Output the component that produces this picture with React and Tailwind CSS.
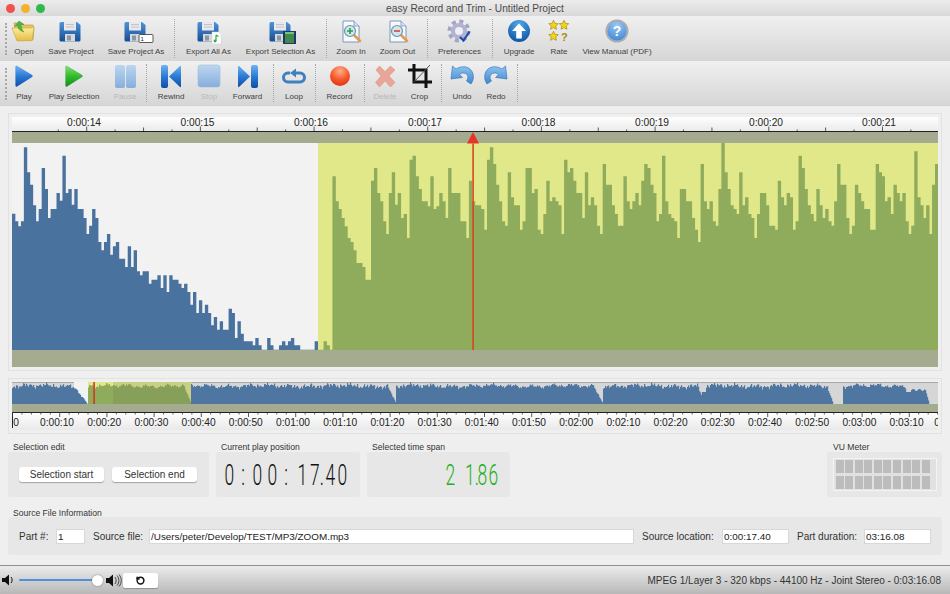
import { RotateCcw } from "lucide-react";

const leftTops = [
  327, 350, 365, 350, 128, 203, 240, 302, 350, 313, 190, 253, 340, 313, 313, 265, 288, 153, 265, 253, 300, 253, 313, 313, 340, 388, 363, 313, 340, 412, 437, 412, 388, 450, 425, 412, 462, 462, 487, 425, 487, 437, 500, 512, 500, 500, 537, 525, 525, 512, 550, 512, 562, 512, 525, 525, 537, 550, 537, 562, 600, 562, 625, 587, 625, 600, 625, 662, 637, 675, 650, 675, 675, 612, 625, 700, 650, 687, 710, 710, 710, 722, 700, 722, 735, 735, 700, 722, 735, 735, 722, 710, 722, 710, 700, 722, 722, 735, 735, 735, 735, 735, 710, 735, 735, 710, 722, 735, 215, 290, 313, 340, 365, 400, 412, 437, 475, 475, 487, 525, 525, 228, 190, 265, 290, 350, 388, 265, 203, 300, 265, 340, 328, 400, 165, 153, 215, 253, 290, 290, 305, 215, 313, 305, 265, 290, 340, 190, 265, 265, 265, 350, 350, 400, 228, 290, 302, 302,
];

const rightTops = [
  313, 375, 165, 128, 178, 240, 290, 350, 363, 203, 278, 302, 302, 375, 350, 190, 190, 265, 253, 375, 388, 328, 228, 290, 278, 290, 302, 388, 165, 203, 190, 228, 265, 265, 340, 203, 302, 278, 302, 363, 388, 178, 240, 240, 302, 328, 363, 363, 215, 290, 313, 290, 265, 302, 228, 178, 190, 240, 265, 350, 328, 153, 290, 328, 340, 350, 400, 253, 253, 290, 290, 340, 375, 412, 178, 290, 313, 290, 350, 363, 253, 115, 203, 253, 302, 313, 328, 203, 302, 278, 328, 340, 400, 328, 265, 265, 302, 363, 363, 375, 228, 278, 302, 265, 278, 375, 350, 153, 190, 253, 302, 328, 350, 253, 302, 340, 313, 350, 363, 290, 178, 240, 240, 340, 388, 363, 240, 265, 290, 313, 313, 375, 375, 178, 203, 215, 290, 278, 328, 240, 265, 290, 265, 350, 388, 363, 140, 278, 302, 340, 302, 388, 240, 178,
];

const LEFT_STEP = 2.967;
const RIGHT_START = 469;
const SELECTION_X = 306;
const rightStep = (926 - RIGHT_START) / rightTops.length;

const bars = [
  ...leftTops.map((top, i) => ({ x: i * LEFT_STEP, w: LEFT_STEP, top })),
  ...rightTops.map((top, i) => ({ x: RIGHT_START + i * rightStep, w: rightStep, top })),
];

// bars overlap a little so no hairlines show between them
const toRect = (b) => {
  const y = (b.top - 115) / 3;
  return `M${b.x.toFixed(2)} ${y.toFixed(2)}H${(b.x + b.w + 0.4).toFixed(2)}V207H${b.x.toFixed(2)}Z`;
};

const bluePath = bars.filter((b) => b.x < SELECTION_X - 1).map(toRect).join("");
const greenPath = bars.filter((b) => b.x >= SELECTION_X - 1).map(toRect).join("");

const mainTicks = [];
for (let i = -1; i < 33; i++) {
  const x = 74.7 + i * 28.42;
  const len = i % 4 === 0 ? 4.5 : i % 2 === 0 ? 3.5 : 1.5;
  mainTicks.push({ x, len });
}

const mainLabels = [
  ["0:00:14", 72],
  ["0:00:15", 185.5],
  ["0:00:16", 299],
  ["0:00:17", 413],
  ["0:00:18", 526.5],
  ["0:00:19", 640],
  ["0:00:20", 754],
  ["0:00:21", 867],
];

const overviewLabels = [
  "0:00:10", "0:00:20", "0:00:30", "0:00:40", "0:00:50", "0:01:00", "0:01:10", "0:01:20", "0:01:30", "0:01:40",
  "0:01:50", "0:02:00", "0:02:10", "0:02:20", "0:02:30", "0:02:40", "0:02:50", "0:03:00", "0:03:10",
];

// envelope of the whole file for the small overview strip
const overviewHeight = (X) => {
  const n = 18 + Math.sin(X * 0.31) + 0.9 * Math.sin(X * 0.83 + 1) + 0.7 * Math.sin(X * 1.9 + 2) + 0.6 * Math.sin(X * 3.7) + 1.2 * Math.sin(X * 5.3) * Math.sin(X * 0.9);
  const fall = (a, b, to = 0) => n + ((to - n) * (X - a)) / (b - a);
  if (X >= 74 && X < 87) return fall(74, 87);
  if (X >= 87 && X < 88) return 0;
  if (X >= 183 && X < 191) return fall(183, 191);
  if (X >= 387 && X < 396) return fall(387, 396);
  if (X >= 593 && X < 603) return fall(593, 603);
  if (X >= 697 && X < 702) return fall(697, 702, 7);
  if (X >= 702 && X < 706) return 12;
  if (X >= 827 && X < 833) return fall(827, 833);
  if (X >= 833 && X < 843) return 0;
  if (X >= 906 && X < 911) return 12;
  if (X >= 911 && X < 925) return 14 + Math.sin(X);
  if (X >= 925 && X < 929) return 14 - (X - 925) * 3.5;
  if (X >= 929) return 0;
  return n;
};

const overviewPath = (from, to) => {
  let d = "";
  for (let X = from; X < to; X++) {
    const h = overviewHeight(X);
    d += `M${X - 12} ${(22 - h).toFixed(1)}H${X - 10.8}V22H${X - 12}Z`;
  }
  return d;
};

const Defs = () => (
  <svg className="block h-0 w-0">
    <defs>
      <linearGradient id="disk" x1="0" y1="0" x2="0" y2="1">
        <stop offset="0" stopColor="#4f93d8" />
        <stop offset="1" stopColor="#174d94" />
      </linearGradient>
      <linearGradient id="blue" x1="0" y1="0" x2="0" y2="1">
        <stop offset="0" stopColor="#6fb2f0" />
        <stop offset="0.5" stopColor="#2a7ad6" />
        <stop offset="1" stopColor="#0f4fa6" />
      </linearGradient>
      <linearGradient id="green" x1="0" y1="0" x2="0" y2="1">
        <stop offset="0" stopColor="#7fe06a" />
        <stop offset="0.5" stopColor="#33bb2c" />
        <stop offset="1" stopColor="#129015" />
      </linearGradient>
      <linearGradient id="pale" x1="0" y1="0" x2="0" y2="1">
        <stop offset="0" stopColor="#bcd6ef" />
        <stop offset="1" stopColor="#85aede" />
      </linearGradient>
      <linearGradient id="arrow" x1="0" y1="0" x2="0" y2="1">
        <stop offset="0" stopColor="#8cc4f2" />
        <stop offset="1" stopColor="#3f86cc" />
      </linearGradient>
      <linearGradient id="folder" x1="0" y1="0" x2="0" y2="1">
        <stop offset="0" stopColor="#fff0a0" />
        <stop offset="1" stopColor="#e5bb45" />
      </linearGradient>
      <radialGradient id="rec" cx="0.5" cy="0.25" r="0.8">
        <stop offset="0" stopColor="#ffb08a" />
        <stop offset="0.55" stopColor="#f5592c" />
        <stop offset="1" stopColor="#e0300c" />
      </radialGradient>
      <radialGradient id="orb" cx="0.5" cy="0.2" r="0.85">
        <stop offset="0" stopColor="#52a8ea" />
        <stop offset="1" stopColor="#0b4f9e" />
      </radialGradient>
      <radialGradient id="help" cx="0.5" cy="0.2" r="0.85">
        <stop offset="0" stopColor="#9cc8f2" />
        <stop offset="1" stopColor="#3f86d6" />
      </radialGradient>
    </defs>
  </svg>
);

const Icon = ({ children, w = 28, h = 24 }) => (
  <svg width={w} height={h} viewBox={`0 0 ${w} ${h}`} className="block overflow-visible">
    {children}
  </svg>
);

const Floppy = ({ children }) => (
  <Icon>
    <path d="M4 3h16l3.5 3v15a1.5 1.5 0 0 1-1.5 1.5H4A1.5 1.5 0 0 1 2.500 21V4.500A1.500 1.500 0 0 1 4 3z" fill="url(#disk)" />
    <rect x="7" y="3" width="12" height="8.500" fill="#e9e9ec" />
    <path d="M9 5.500h8M9 8h8" stroke="#b5b8c0" strokeWidth="0.8" />
    <rect x="8" y="15" width="10" height="7.500" fill="#d5d8dd" />
    <rect x="10" y="16.500" width="4" height="5" fill="#8f97a3" />
    {children}
  </Icon>
);

const SaveAsBadge = () => (
  <g>
    <rect x="17" y="15.500" width="14" height="8" rx="1" fill="#fff" stroke="#333" strokeWidth="0.8" />
    <text x="18.500" y="22" fontSize="6" fill="#222">1</text>
  </g>
);

const NoteBadge = () => (
  <g>
    <path d="M17 13h7l2 2v10h-9z" fill="#fff" stroke="#ccc" strokeWidth="0.5" />
    <path d="M21 16v6M21 16l2.500 1.500" stroke="#2fae3a" strokeWidth="1.200" fill="none" />
    <circle cx="20" cy="22" r="1.400" fill="#2fae3a" />
  </g>
);

const SelectionBadge = () => (
  <g>
    <rect x="16" y="12" width="13" height="13" fill="#1d3a66" />
    <rect x="18" y="13" width="9" height="11" fill="#3f8a4a" />
    <path d="M18 13h9v2h-9z" fill="#7cc07e" />
  </g>
);

const OpenIcon = () => (
  <Icon w={26}>
    <path d="M3 4h8l2 2h9l1 3 -1 12H6z" fill="#e6c75a" stroke="#b6933a" strokeWidth="0.6" />
    <path d="M1 9h19l3 -1 -2 13.500 -15 .5z" fill="url(#folder)" stroke="#c7a240" strokeWidth="0.6" />
    <path d="M8 2l5 3.500 -3 .5c.5 3 1 5 3 7 -4 -1 -6 -3 -6.500 -6.500l-3 .8z" fill="#4fb548" stroke="#2f8a2f" strokeWidth="0.4" />
  </Icon>
);

const ZoomIcon = ({ out }) => (
  <Icon w={24}>
    <path d="M4 2h11l5 5v16H4z" fill="#f7f9fc" stroke="#7a96bb" strokeWidth="1" />
    <path d="M15 2v5h5" fill="#d8e3f0" stroke="#7a96bb" strokeWidth="0.8" />
    <path d="M15 16l6 6" stroke="#e59a4d" strokeWidth="2.600" strokeLinecap="round" />
    <circle cx="11" cy="12" r="5.500" fill="#cfe6ea" stroke="#6d95a8" strokeWidth="1.200" />
    {out ? (
      <path d="M8 12h6" stroke="#d8453a" strokeWidth="1.600" />
    ) : (
      <path d="M8 12h6M11 9v6" stroke="#2f9e4f" strokeWidth="1.600" />
    )}
  </Icon>
);

const GearIcon = () => (
  <Icon>
    <circle cx="13" cy="12" r="9.500" fill="none" stroke="#a3a5c4" strokeWidth="4" strokeDasharray="4 3.460" />
    <circle cx="13" cy="12" r="8" fill="#b2b4cf" />
    <circle cx="13" cy="12" r="4" fill="#eeeef4" />
    <path d="M14 18l3.500 3.500 6 -9" fill="none" stroke="#1f4fa8" strokeWidth="2.200" />
  </Icon>
);

const UpgradeIcon = () => (
  <Icon w={24}>
    <circle cx="12" cy="12" r="11" fill="url(#orb)" />
    <path d="M12 4.500l7 7.500h-4.200v7.500h-5.600V12H5z" fill="#fff" />
  </Icon>
);

const Star = ({ x, y }) => (
  <path
    transform={`translate(${x} ${y}) scale(.48)`}
    d="M0 -10l3 6.500 7 .8 -5.200 4.800 1.400 7L0 5.500 -6.200 9l1.400 -7 -5.200 -4.800 7 -.8z"
    fill="#f4d50f"
    stroke="#7c6a10"
    strokeWidth="1"
  />
);

const RateIcon = () => (
  <Icon w={24}>
    <Star x={6.500} y={6} />
    <Star x={17} y={6} />
    <Star x={6.500} y={17} />
    <text x="14" y="21.500" fontSize="11" fontWeight="700" fill="#a78a12">?</text>
  </Icon>
);

const HelpIcon = () => (
  <Icon w={24}>
    <circle cx="12" cy="12" r="11.500" fill="#a9adb3" />
    <circle cx="12" cy="12" r="9.500" fill="url(#help)" />
    <text x="12" y="17" fontSize="14" fontWeight="700" fill="#fff" textAnchor="middle">?</text>
  </Icon>
);

const PlayIcon = ({ fill }) => (
  <Icon w={22}>
    <path d="M4 2l15 9a1.200 1.200 0 0 1 0 2L4 22.500a1 1 0 0 1-1.500 -.9V3a1 1 0 0 1 1.500 -1z" fill={fill} stroke="#1a5aa0" strokeOpacity=".25" strokeWidth=".5" />
  </Icon>
);

const PauseIcon = () => (
  <Icon w={24}>
    <rect x="2" y="1" width="10" height="23" rx="2" fill="url(#pale)" />
    <rect x="13" y="1" width="10" height="23" rx="2" fill="url(#pale)" />
  </Icon>
);

const RewindIcon = () => (
  <Icon w={22}>
    <rect x="1" y="1" width="7" height="23" rx="2" fill="url(#blue)" />
    <path d="M9 12.500L20 2a.6 .6 0 0 1 1 .5v20a.6 .6 0 0 1-1 .5z" fill="url(#blue)" />
  </Icon>
);

const StopIcon = () => (
  <Icon w={24}>
    <rect x="1" y="1" width="22" height="22" rx="2.500" fill="url(#pale)" stroke="#a0bcd9" strokeWidth=".6" />
  </Icon>
);

const ForwardIcon = () => (
  <Icon w={22}>
    <rect x="14" y="1" width="7" height="23" rx="2" fill="url(#blue)" />
    <path d="M13 12.500L2 2a.6 .6 0 0 0-1 .5v20a.6 .6 0 0 0 1 .5z" fill="url(#blue)" />
  </Icon>
);

const LoopIcon = () => (
  <Icon w={24}>
    <path d="M13 9h5a3.500 3.500 0 0 1 0 9H6a3.500 3.500 0 0 1 0 -9h2" fill="none" stroke="#3f80bd" strokeWidth="3" />
    <path d="M14 4.500v9l-6 -4.500z" fill="#3f80bd" />
  </Icon>
);

const RecordIcon = () => (
  <Icon w={24}>
    <circle cx="12" cy="12" r="10" fill="url(#rec)" />
  </Icon>
);

const DeleteIcon = () => (
  <Icon w={24}>
    <path d="M3 6l3.500 -4L12 7.500 17.500 2 22 6l-6 6 6 6.500L17.500 23 12 17l-5.500 6L2.500 18.500 8 12z" fill="#e9a596" stroke="#d98f80" strokeWidth=".5" />
  </Icon>
);

const CropIcon = () => (
  <Icon w={24}>
    <path d="M6 0v18h18M0 6h18v18" fill="none" stroke="#111" strokeWidth="3" />
    <path d="M6 18L22 1" stroke="#555" strokeWidth="1" />
  </Icon>
);

const UndoIcon = () => (
  <Icon w={26}>
    <path d="M7 5c6 -4 15 -3 17 5 1 4 0 7 -2 10l-4.500 -3c2 -3 2 -6 -1 -7.500 -2 -1 -4.500 -.5 -6 1l3 3L2 15 3.500 2z" fill="url(#arrow)" stroke="#2f6fb0" strokeWidth=".6" />
  </Icon>
);

const RedoIcon = () => (
  <Icon w={26}>
    <path d="M19 5c-6 -4 -15 -3 -17 5 -1 4 0 7 2 10l4.500 -3c-2 -3 -2 -6 1 -7.500 2 -1 4.500 -.5 6 1l-3 3L24 15 22.500 2z" fill="url(#arrow)" stroke="#2f6fb0" strokeWidth=".6" />
  </Icon>
);

const ToolButton = ({ width, label, disabled, children }) => (
  <div className={`${width} flex shrink-0 flex-col items-center`}>
    <div className="flex h-[24px] items-center justify-center">{children}</div>
    <span className={`mt-[3px] whitespace-nowrap text-[8px] leading-[12px] ${disabled ? "text-[#b9b9b9]" : "text-[#3f3f3f]"}`}>
      {label}
    </span>
  </div>
);

const Sep = () => (
  <div className="flex w-[8px] shrink-0 justify-center pb-[3px]">
    <div className="h-full border-l border-dotted border-[#a6a6a6]" />
  </div>
);

const Grip = () => (
  <div className="flex w-[8px] shrink-0 justify-end pr-[1px] pt-[4px]">
    <div className="h-[32px] border-l-2 border-dotted border-[#a8a8a8]" />
  </div>
);

const LcdCell = ({ width, ch, color }) => (
  <span className={`${width} flex h-full shrink-0 items-center justify-center`}>
    <span className={`inline-block scale-x-[.58] font-['Roboto',sans-serif] text-[30px] font-light leading-none ${color}`}>
      {ch}
    </span>
  </span>
);

const Field = ({ width, value }) => (
  <input
    readOnly
    value={value}
    className={`${width} h-[15px] shrink-0 border border-[#d8d8d8] bg-white px-[1px] text-[9.900px] leading-[13px] text-[#222] outline-none`}
  />
);

const Panel = ({ label, labelClass = "pl-[5px]", width, children }) => (
  <div className={`${width} flex shrink-0 flex-col`}>
    <div className={`${labelClass} h-[10px] text-[8.600px] leading-[10px] text-[#333]`}>{label}</div>
    <div className="h-[45px] rounded-[3px] bg-[#e7e7e7]">{children}</div>
  </div>
);

export default function App() {
  const vu = [...Array(10).keys()];
  return (
    <div className="flex h-screen w-screen flex-col overflow-hidden bg-[#efefef] font-['Liberation_Sans',sans-serif]">
      <Defs />

      <div className="relative flex h-[16px] shrink-0 items-center justify-center bg-gradient-to-b from-[#ececec] to-[#d9d9d9] pt-[1px]">
        <div className="absolute left-[6px] top-[3.500px] flex gap-[6px]">
          <span className="h-[9px] w-[9px] rounded-full bg-[#f0524c]" />
          <span className="h-[9px] w-[9px] rounded-full bg-[#f6b02e]" />
          <span className="h-[9px] w-[9px] rounded-full bg-[#2fb94a]" />
        </div>
        <span className="text-[10.200px] text-[#4a4a4a]">easy Record and Trim - Untitled Project</span>
      </div>

      <div className="flex h-[44.500px] shrink-0 bg-gradient-to-b from-[#f0f0f0] to-[#d6d6d6] pt-[3px]">
        <Grip />
        <ToolButton width="w-[32px]" label="Open"><OpenIcon /></ToolButton>
        <ToolButton width="w-[62px]" label="Save Project"><Floppy /></ToolButton>
        <ToolButton width="w-[68px]" label="Save Project As"><Floppy><SaveAsBadge /></Floppy></ToolButton>
        <Sep />
        <ToolButton width="w-[61px]" label="Export All As"><Floppy><NoteBadge /></Floppy></ToolButton>
        <ToolButton width="w-[83px]" label="Export Selection As"><Floppy><SelectionBadge /></Floppy></ToolButton>
        <Sep />
        <ToolButton width="w-[42px]" label="Zoom In"><ZoomIcon /></ToolButton>
        <ToolButton width="w-[51px]" label="Zoom Out"><ZoomIcon out /></ToolButton>
        <Sep />
        <ToolButton width="w-[57px]" label="Preferences"><GearIcon /></ToolButton>
        <Sep />
        <ToolButton width="w-[46px]" label="Upgrade"><UpgradeIcon /></ToolButton>
        <ToolButton width="w-[34px]" label="Rate"><RateIcon /></ToolButton>
        <ToolButton width="w-[82px]" label="View Manual (PDF)"><HelpIcon /></ToolButton>
      </div>

      <div className="flex h-[45.500px] shrink-0 border-b border-[#d2d2d2] bg-gradient-to-b from-[#f0f0f0] to-[#d6d6d6] pt-[3px]">
        <Grip />
        <ToolButton width="w-[32px]" label="Play"><PlayIcon fill="url(#blue)" /></ToolButton>
        <ToolButton width="w-[68px]" label="Play Selection"><PlayIcon fill="url(#green)" /></ToolButton>
        <ToolButton width="w-[34px]" label="Pause" disabled><PauseIcon /></ToolButton>
        <Sep />
        <ToolButton width="w-[42px]" label="Rewind"><RewindIcon /></ToolButton>
        <ToolButton width="w-[34px]" label="Stop" disabled><StopIcon /></ToolButton>
        <ToolButton width="w-[43px]" label="Forward"><ForwardIcon /></ToolButton>
        <Sep />
        <ToolButton width="w-[34px]" label="Loop"><LoopIcon /></ToolButton>
        <Sep />
        <ToolButton width="w-[41px]" label="Record"><RecordIcon /></ToolButton>
        <Sep />
        <ToolButton width="w-[34px]" label="Delete" disabled><DeleteIcon /></ToolButton>
        <ToolButton width="w-[35px]" label="Crop"><CropIcon /></ToolButton>
        <Sep />
        <ToolButton width="w-[34px]" label="Undo"><UndoIcon /></ToolButton>
        <ToolButton width="w-[34px]" label="Redo"><RedoIcon /></ToolButton>
        <Sep />
      </div>

      <div className="mx-[8px] mt-[7px] w-[934px] shrink-0 border border-[#e2e2e2] p-[3px]">
        <div className="relative w-[926px]">
          <div className="h-[15px] bg-gradient-to-b from-white to-[#e9e9e9]">
            <svg width="926" height="15" className="block">
              <path d="M0 14.500H926" stroke="#222" strokeWidth="1" />
              {mainTicks.map((t) => (
                <path key={t.x} d={`M${t.x} ${14 - t.len}V14`} stroke="#333" strokeWidth="0.8" />
              ))}
              {mainLabels.map(([text, x]) => (
                <text key={text} x={x} y="8.800" fontSize="10.200" fill="#222" textAnchor="middle">{text}</text>
              ))}
            </svg>
          </div>
          <div className="h-[11px] bg-[#a5ab8f]" />
          <svg width="926" height="207" className="block">
            <rect width="306" height="207" fill="#f2f2f2" />
            <rect x="306" width="620" height="207" fill="#e0e88a" />
            <path d={bluePath} fill="#4a729e" />
            <path d={greenPath} fill="#8fab5c" />
          </svg>
          <div className="h-[17px] bg-[#a5ab8f]" />
          <svg width="14" height="218" className="absolute left-[454px] top-[15px] block overflow-visible">
            <path d="M7 0l6 11.500H1z" fill="#e5352a" />
            <rect x="6.300" y="11.500" width="1.600" height="206.500" fill="#d9471f" />
          </svg>
        </div>
      </div>

      <div className="mx-[8px] mt-[7px] w-[934px] shrink-0 border border-[#e2e2e2] p-[3px]">
        <div className="w-[926px]">
          <svg width="926" height="22" className="block">
            <rect width="926" height="22" fill="#d6d6d6" />
            <rect x="0" y="0" width="926" height="1" fill="#a9a9a9" />
            <rect x="62" y="0" width="39" height="22" fill="#f2f2f2" />
            <rect x="76" y="0" width="25" height="22" fill="#e0e88a" />
            <rect x="101" y="0" width="78" height="22" fill="#c9d083" />
            <path d={overviewPath(12, 88)} fill="#4e76a0" />
            <path d={overviewPath(88, 113)} fill="#8fab5c" />
            <path d={overviewPath(113, 191)} fill="#86a05a" />
            <path d={overviewPath(191, 938)} fill="#4e76a0" />
            <rect x="81.300" y="0" width="1.600" height="22" fill="#d9371f" />
          </svg>
          <div className="h-[8px] bg-[#a5ab8f]" />
          <div className="h-[18px] bg-gradient-to-b from-white to-[#e9e9e9]">
            <svg width="926" height="18" className="block">
              <path d="M0 .500H926" stroke="#222" strokeWidth="1" />
              <path d="M.5 0V16" stroke="#222" strokeWidth="1" />
              {[...Array(99).keys()].map((i) => (
                <path key={i} d={`M${i * 9.44 + 0.5} 0V${i % 5 === 0 ? 5 : 2.500}`} stroke="#333" strokeWidth="0.8" />
              ))}
              <text x="4" y="13.500" fontSize="10.200" fill="#222" textAnchor="middle">0</text>
              {overviewLabels.map((text, i) => (
                <text key={text} x={45 + i * 47.2} y="13.500" fontSize="10.200" fill="#222" textAnchor="middle">{text}</text>
              ))}
              <text x="925" y="13.500" fontSize="10.200" fill="#222" textAnchor="middle">0</text>
            </svg>
          </div>
        </div>
      </div>

      <div className="mt-[8px] flex shrink-0 gap-[7px] px-[8px]">
        <Panel label="Selection edit" width="w-[201px]">
          <div className="flex h-full items-center gap-[8px] pl-[11px]">
            <button className="h-[15px] w-[85px] rounded-[3px] bg-white text-[10px] leading-[15px] text-[#333] shadow-[0_1px_1px_rgba(0,0,0,.3)]">Selection start</button>
            <button className="h-[15px] w-[85px] rounded-[3px] bg-white text-[10px] leading-[15px] text-[#333] shadow-[0_1px_1px_rgba(0,0,0,.3)]">Selection end</button>
          </div>
        </Panel>
        <Panel label="Current play position" width="w-[144px]">
          <div className="flex h-full pl-[5px]">
            <LcdCell width="w-[16px]" ch="0" color="text-[#111]" />
            <LcdCell width="w-[13px]" ch=":" color="text-[#111]" />
            <LcdCell width="w-[15px]" ch="0" color="text-[#111]" />
            <LcdCell width="w-[15px]" ch="0" color="text-[#111]" />
            <LcdCell width="w-[13px]" ch=":" color="text-[#111]" />
            <LcdCell width="w-[18px]" ch="1" color="text-[#111]" />
            <LcdCell width="w-[12px]" ch="7." color="text-[#111]" />
            <LcdCell width="w-[14px]" ch="4" color="text-[#111]" />
            <LcdCell width="w-[11px]" ch="0" color="text-[#111]" />
          </div>
        </Panel>
        <Panel label="Selected time span" width="w-[143px]">
          <div className="flex h-full pl-[76px]">
            <LcdCell width="w-[15px]" ch="2" color="text-[#22b022]" />
            <LcdCell width="w-[12px] ml-[8px]" ch="1." color="text-[#22b022]" />
            <LcdCell width="w-[8px]" ch="8" color="text-[#22b022]" />
            <LcdCell width="w-[14px]" ch="6" color="text-[#22b022]" />
          </div>
        </Panel>
        <div className="ml-auto">
          <Panel label="VU Meter" labelClass="pl-[6px]" width="w-[115px]">
            <div className="flex h-full items-center justify-center">
              <div className="flex h-[33px] w-[104px] flex-col justify-center gap-[3px] border border-[#f4f4f4] bg-[#e1e1e1] pl-[2px]">
                {[0, 1].map((row) => (
                  <div key={row} className="flex gap-[1.600px]">
                    {vu.map((i) => (
                      <span key={i} className="h-[13px] w-[8px] bg-[#bcbcbc]" />
                    ))}
                  </div>
                ))}
              </div>
            </div>
          </Panel>
        </div>
      </div>

      <div className="mt-[12px] h-[8px] shrink-0 pl-[13px] text-[8.600px] leading-[9px] text-[#333]">Source File Information</div>
      <div className="mx-[8px] flex h-[38px] shrink-0 items-center rounded-[3px] bg-[#e7e7e7] text-[10px] text-[#333]">
        <span className="ml-[11px] w-[37px] shrink-0">Part #:</span>
        <Field width="w-[29px]" value="1" />
        <span className="ml-[8px] w-[56px] shrink-0">Source file:</span>
        <Field width="w-[485px]" value="/Users/peter/Develop/TEST/MP3/ZOOM.mp3" />
        <span className="ml-[8px] w-[80px] shrink-0">Source location:</span>
        <Field width="w-[67px]" value="0:00:17.40" />
        <span className="ml-[8px] w-[67px] shrink-0">Part duration:</span>
        <Field width="w-[67px]" value="03:16.08" />
      </div>

      <div className="mt-auto flex h-[29px] shrink-0 items-center border-t border-[#8f8f8f] bg-gradient-to-b from-[#ececec] to-[#b8b8b8] pr-[9px]">
        <svg width="13" height="12" viewBox="0 0 13 12" className="ml-[2px] block shrink-0">
          <path d="M0 4h3l4 -3.500v11L3 8H0z" fill="#111" />
          <path d="M9 3c1.500 2 1.500 4 0 6" fill="none" stroke="#111" strokeWidth="1" />
        </svg>
        <div className="ml-[4px] flex w-[84px] shrink-0 items-center">
          <div className="h-[2px] w-[74px] shrink-0 rounded-full bg-[#4f8fdc]" />
          <span className="-ml-[1px] h-[11px] w-[11px] shrink-0 rounded-full bg-white shadow-[0_0_2px_rgba(0,0,0,.45)]" />
        </div>
        <svg width="16" height="13" viewBox="0 0 16 13" className="ml-[3px] block shrink-0">
          <path d="M0 4h3l4 -3.500v12L3 9H0z" fill="#111" />
          <path d="M9 3c1.500 2 1.500 5 0 7M11 1.500c2.500 3 2.500 7 0 10M13 .5c3 3.500 3 8.500 0 12" fill="none" stroke="#222" strokeWidth=".8" />
        </svg>
        <button className="ml-[1px] flex h-[15px] w-[35px] shrink-0 items-center justify-center rounded-[2px] bg-white shadow-[0_1px_1px_rgba(0,0,0,.25)]">
          <RotateCcw size={9} strokeWidth={4} color="#111" />
        </button>
        <span className="ml-auto whitespace-nowrap pt-[1px] text-[10px] text-[#333]">MPEG 1/Layer 3 - 320 kbps - 44100 Hz - Joint Stereo - 0:03:16.08</span>
      </div>
    </div>
  );
}
